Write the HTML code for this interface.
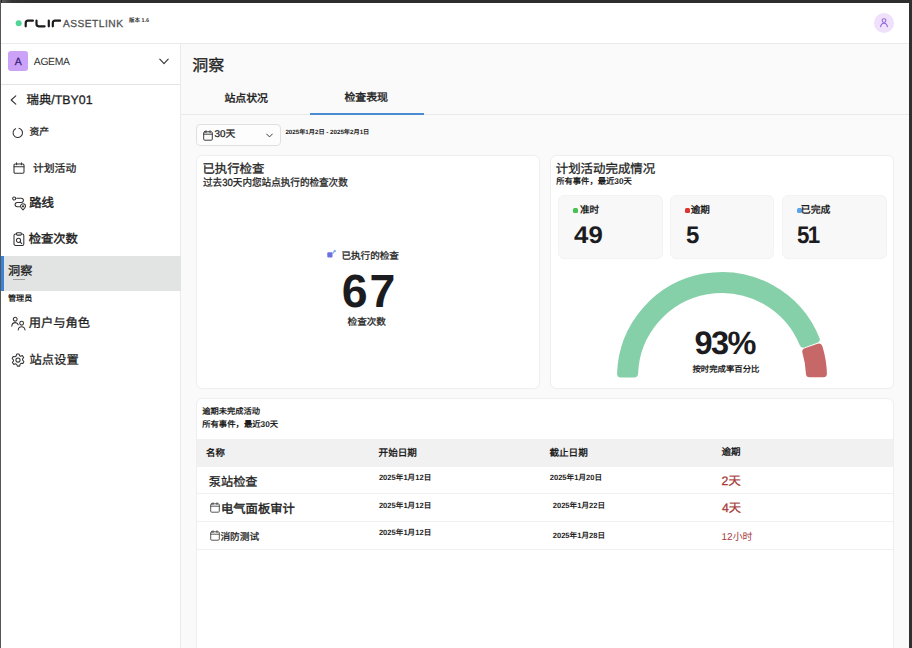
<!DOCTYPE html>
<html lang="zh-CN">
<head>
<meta charset="utf-8">
<title>洞察 - AssetLink</title>
<style>
*{box-sizing:border-box;margin:0;padding:0}
html,body{width:912px;height:648px;overflow:hidden;background:#fff}
body{position:relative;font-family:"Liberation Sans",sans-serif;color:#1f1f1f;text-rendering:geometricPrecision}
.abs{position:absolute}
.t{position:absolute;white-space:nowrap;line-height:1;color:#1f1f1f}
.b{font-weight:bold}
.m{-webkit-text-stroke:0.3px currentColor}
.sb{-webkit-text-stroke:0.42px currentColor}
#frameTop{left:0;top:0;width:912px;height:2.9px;background:linear-gradient(90deg,#0c0c0c 0,#0c0c0c 1px,#585858 2.5px,#343434 12px,#2e2e2e 40px)}
#frameLeft{left:0;top:0;width:1px;height:648px;background:#555}
#frameRight{left:909px;top:0;width:3px;height:648px;background:#303030}
#header{left:1px;top:3px;width:908px;height:41px;background:#fff;border-bottom:1px solid #eaeaea}
#sidebar{left:1px;top:44px;width:180px;height:604px;background:#fff;border-right:1px solid #ebebeb}
#main{left:181px;top:44px;width:728px;height:604px;background:#fafafa}
.card{position:absolute;background:#fff;border:1px solid #eeeeee;border-radius:6px}
.stat{position:absolute;background:#f8f8f8;border:1px solid #f3f3f3;border-radius:6px;top:195px;width:105px;height:64px}
.dot{position:absolute;width:5px;height:5px;border-radius:1.5px}
.ico{position:absolute;overflow:visible}
.hl{position:absolute;height:1px;background:#f0f0f0}
</style>
</head>
<body>
<div class="abs" id="header"></div>
<div class="abs" id="sidebar"></div>
<div class="abs" id="main"></div>
<div class="abs" id="frameTop"></div>
<div class="abs" id="frameLeft"></div>
<div class="abs" id="frameRight"></div>

<!-- HEADER -->
<svg class="ico" id="logo" style="left:15px;top:18px" width="50" height="11" viewBox="0 0 50 11">
  <circle cx="3.7" cy="5.2" r="3" fill="#4fd596"/>
  <g fill="none" stroke="#1b1b1b" stroke-width="2.2" stroke-linecap="round" stroke-linejoin="round">
    <path d="M10.7 8.3V4.9Q10.7 2.7 12.9 2.7H17.9"/>
    <path d="M21.5 2.7V6.1Q21.5 8.3 23.7 8.3H29.6"/>
    <path d="M33.8 2.7V8.3"/>
    <path d="M37.8 8.3V4.9Q37.8 2.7 40 2.7H45.1"/>
  </g>
</svg>
<div class="t m" id="assetlink" style="left:62.90px;top:19.50px;font-size:10.2px;color:#525252;letter-spacing:0.5px">ASSETLINK</div>
<div class="t b" id="ver" style="left:129.00px;top:18.80px;font-size:5.45px;color:#333">版本 1.6</div>
<div class="abs" id="userBtn" style="left:874px;top:13px;width:20px;height:20px;border-radius:50%;background:#efe0fb"></div>
<svg class="ico" id="userIco" style="left:879px;top:17px" width="10" height="11" viewBox="0 0 10 11">
  <g fill="none" stroke="#9466d6" stroke-width="1.1" stroke-linecap="round">
    <circle cx="5" cy="3.6" r="1.9"/>
    <path d="M1.6 9.6C2 7.2 3.4 6.2 5 6.2C6.6 6.2 8 7.2 8.4 9.6"/>
  </g>
</svg>

<!-- SIDEBAR -->
<div class="abs" id="orgBox" style="left:8.40px;top:51.20px;width:20px;height:20px;border-radius:3px;background:#cca1f8"></div>
<div class="t m" id="orgA" style="left:14.80px;top:57.80px;font-size:10.4px;color:#3d2380">A</div>
<div class="t" id="orgName" style="left:33.80px;top:57.70px;font-size:10.4px;color:#333;letter-spacing:-0.35px">AGEMA</div>
<svg class="ico" id="orgChev" style="left:159px;top:58px" width="10" height="7" viewBox="0 0 10 7">
  <path d="M0.8 1.2L5 5.6L9.2 1.2" fill="none" stroke="#333" stroke-width="1.1" stroke-linecap="round" stroke-linejoin="round"/>
</svg>
<div class="hl" id="sideDiv" style="left:1px;top:84px;width:179px;background:#e4e4e4"></div>

<svg class="ico" id="backChev" style="left:10px;top:95px" width="7" height="10" viewBox="0 0 7 10">
  <path d="M5.8 0.8L1.2 5L5.8 9.2" fill="none" stroke="#333" stroke-width="1.1" stroke-linecap="round" stroke-linejoin="round"/>
</svg>
<div class="t m" id="site" style="left:26.50px;top:93.60px;font-size:12.4px">瑞典/TBY01</div>

<svg class="ico" id="icoAsset" style="left:11.90px;top:127.00px" width="12" height="12" viewBox="0 0 12 12">
  <circle cx="5.8" cy="5.8" r="4.7" fill="none" stroke="#333" stroke-width="1.05" stroke-dasharray="26 3.5" transform="rotate(-80 5.8 5.8)"/>
</svg>
<div class="t m" id="navAsset" style="left:29.50px;top:127.60px;font-size:9.8px">资产</div>

<svg class="ico" id="icoPlan" style="left:12.5px;top:161.5px" width="12" height="12" viewBox="0 0 12 12">
  <g fill="none" stroke="#333" stroke-width="1.05" stroke-linejoin="round" stroke-linecap="round">
    <rect x="1" y="2" width="10" height="9.2" rx="1.2"/>
    <path d="M1 4.8H11M3.6 0.8V2.8M8.4 0.8V2.8"/>
  </g>
</svg>
<div class="t m" id="navPlan" style="left:33.00px;top:163.90px;font-size:10.8px;font-weight:500">计划活动</div>

<svg class="ico" id="icoRoute" style="left:11.5px;top:195.5px" width="14" height="15" viewBox="0 0 14 15">
  <g fill="none" stroke="#333" stroke-width="1.05" stroke-linecap="round" stroke-linejoin="round">
    <circle cx="2.2" cy="2.5" r="1.5"/>
    <path d="M4.7 2.2H9.3A2.1 2.1 0 0 1 9.3 6.4H5.3A2.2 2.2 0 0 0 5.3 10.8H7.6"/>
    <path d="M11 14C9.4 12.4 8.5 11.4 8.5 10.3A2.5 2.5 0 0 1 13.5 10.3C13.5 11.4 12.6 12.4 11 14Z" fill="#fff"/>
    <circle cx="11" cy="10.3" r="0.6"/>
  </g>
</svg>
<div class="t sb" id="navRoute" style="left:29.20px;top:196.80px;font-size:12.4px">路线</div>

<svg class="ico" id="icoInsp" style="left:12.5px;top:231.5px" width="12" height="14" viewBox="0 0 12 14">
  <g fill="none" stroke="#333" stroke-width="1.05" stroke-linecap="round" stroke-linejoin="round">
    <rect x="1" y="1.9" width="9.8" height="11.5" rx="1.5"/>
    <rect x="3.5" y="0.7" width="4.8" height="2.4" rx="0.8" fill="#fff"/>
    <circle cx="5.5" cy="8.3" r="2.1"/>
    <path d="M7.1 9.9L8.8 11.6"/>
  </g>
</svg>
<div class="t sb" id="navInsp" style="left:28.70px;top:232.50px;font-size:12.3px">检查次数</div>

<div class="abs" id="navSel" style="left:1px;top:256px;width:179.5px;height:35px;background:#e2e4e4"></div>
<div class="abs" id="navSelBar" style="left:1px;top:256px;width:2.6px;height:35px;background:#3a83d8"></div>
<div class="t m" id="navInsight" style="left:8px;top:264.6px;font-size:12.2px">洞察</div>
<div class="abs" id="navInsightUl" style="left:12.5px;top:278.6px;width:12.5px;height:1px;background:#9a9c9c"></div>

<div class="t b" id="navAdmin" style="left:8px;top:294.6px;font-size:8.1px">管理员</div>

<svg class="ico" id="icoUsers" style="left:11.00px;top:315.90px" width="15" height="15" viewBox="0 0 15 15">
  <g fill="none" stroke="#333" stroke-width="1.05" stroke-linecap="round" stroke-linejoin="round">
    <circle cx="4.2" cy="3.2" r="1.9"/>
    <path d="M0.8 10.2C1 7.6 2.5 6.6 4.2 6.6C5.6 6.6 6.8 7.3 7.3 8.8"/>
    <circle cx="10.6" cy="7.2" r="1.9"/>
    <path d="M7.2 14C7.4 11.7 8.8 10.7 10.6 10.7C12.4 10.7 13.8 11.7 14 14"/>
  </g>
</svg>
<div class="t m" id="navUsers" style="left:28.70px;top:317.10px;font-size:12.25px;font-weight:500">用户与角色</div>

<svg class="ico" id="icoGear" style="left:11.4px;top:352.8px" width="14" height="14" viewBox="0 0 14 14">
  <g fill="none" stroke="#333" stroke-width="1.05" stroke-linejoin="round">
    <path d="M5.9 0.8H8.1L8.5 2.5L9.7 3.1L11.3 2.4L12.7 4.3L11.6 5.7V7L12.9 8.3L11.9 10.3L10.1 10.1L9.1 10.9L8.7 12.9H6.4L5.7 11.2L4.5 10.6L2.8 11.2L1.4 9.3L2.4 7.9V6.6L1.1 5.3L2.2 3.3L4 3.6L5.1 2.8Z" transform="translate(0 0.2)"/>
    <circle cx="7" cy="7" r="2.1"/>
  </g>
</svg>
<div class="t m" id="navSettings" style="left:29.50px;top:353.50px;font-size:12.3px;font-weight:500">站点设置</div>

<!-- MAIN HEADER -->
<div class="t m" id="pageTitle" style="left:192.30px;top:58.80px;font-size:16px">洞察</div>
<div class="t sb" id="tab1" style="left:224.40px;top:93.70px;font-size:10.9px">站点状况</div>
<div class="t sb" id="tab2" style="left:344.40px;top:93.10px;font-size:10.9px">检查表现</div>
<div class="hl" id="tabLine" style="left:181px;top:113.5px;width:728px;background:#e9e9e9"></div>
<div class="abs" id="tabActive" style="left:310px;top:113px;width:114px;height:1.5px;background:#4a8bd2"></div>

<div class="abs" id="rangeSel" style="left:195.5px;top:124px;width:85.5px;height:22px;background:#fdfdfd;border:1px solid #e0e0e0;border-radius:4px"></div>
<svg class="ico" id="icoCal" style="left:202.80px;top:129.60px" width="10" height="11" viewBox="0 0 10 11">
  <g fill="none" stroke="#333" stroke-width="0.95" stroke-linejoin="round" stroke-linecap="round">
    <rect x="0.7" y="1.8" width="8.6" height="8.4" rx="1"/>
    <path d="M0.7 4.2H9.3M3 0.7V2.6M7 0.7V2.6"/>
  </g>
</svg>
<div class="t m" id="rangeVal" style="left:214.60px;top:130.30px;font-size:9.8px;font-weight:500">30天</div>
<svg class="ico" id="rangeChev" style="left:266.4px;top:132.6px" width="7" height="5" viewBox="0 0 7 5">
  <path d="M0.7 1.1L3.5 3.9L6.3 1.1" fill="none" stroke="#3a3a3a" stroke-width="1" stroke-linecap="round" stroke-linejoin="round"/>
</svg>
<div class="t b" id="rangeTxt" style="left:285.40px;top:129.70px;font-size:6.2px;color:#222">2025年1月2日 - 2025年2月1日</div>

<!-- CARD 1 -->
<div class="card" id="card1" style="left:196px;top:155px;width:344px;height:233.5px"></div>
<div class="t m" id="c1Title" style="left:202.40px;top:162.80px;font-size:12.4px">已执行检查</div>
<div class="t m" id="c1Sub" style="left:203.00px;top:179.00px;font-size:10.4px;font-weight:500;transform:scaleX(0.922);transform-origin:0 0">过去30天内您站点执行的检查次数</div>
<svg class="ico" id="c1Ico" style="left:326.70px;top:249.20px" width="11" height="10" viewBox="0 0 11 10">
  <rect x="0.3" y="3.3" width="5.2" height="5.3" rx="1" fill="#6c70e0"/>
  <path d="M5.6 4.4L8.2 1.5" stroke="#86a8ea" stroke-width="1.3" fill="none"/>
  <path d="M6.4 1.1H8.7V3.4Z" fill="#7fa6ea"/>
</svg>
<div class="t m" id="c1Label" style="left:341.40px;top:251.80px;font-size:9.6px;font-weight:500">已执行的检查</div>
<div class="t b" id="c1Num" style="left:341.80px;top:267.50px;font-size:46.5px;color:#1c1c20;letter-spacing:1.8px">67</div>
<div class="t m" id="c1Unit" style="left:347.60px;top:317.70px;font-size:9.6px;font-weight:500">检查次数</div>

<!-- CARD 2 -->
<div class="card" id="card2" style="left:550px;top:155px;width:344px;height:233.5px"></div>
<div class="t m" id="c2Title" style="left:555.70px;top:162.90px;font-size:12.45px">计划活动完成情况</div>
<div class="t b" id="c2Sub" style="left:556.20px;top:177.40px;font-size:8.3px">所有事件，最近30天</div>

<div class="stat" id="stat1" style="left:557.5px"></div>
<div class="dot" id="dot1" style="left:573px;top:208.3px;background:#46c254"></div>
<div class="t b" id="stat1Lbl" style="left:579.90px;top:206.20px;font-size:9.6px">准时</div>
<div class="t b" id="stat1Num" style="left:573.60px;top:224.10px;font-size:24px;color:#1c1c20;letter-spacing:0.2px;transform:scaleX(1.075);transform-origin:0 0">49</div>

<div class="stat" id="stat2" style="left:669.5px;width:104.5px"></div>
<div class="dot" id="dot2" style="left:685px;top:208.3px;background:#dc3232"></div>
<div class="t b" id="stat2Lbl" style="left:690.70px;top:206.20px;font-size:9.6px">逾期</div>
<div class="t b" id="stat2Num" style="left:685.90px;top:224.10px;font-size:24px;color:#1c1c20">5</div>

<div class="stat" id="stat3" style="left:781.5px"></div>
<div class="dot" id="dot3" style="left:796.8px;top:208.3px;background:#5aa3ee"></div>
<div class="t b" id="stat3Lbl" style="left:800.80px;top:205.70px;font-size:9.9px">已完成</div>
<div class="t b" id="stat3Num" style="left:797.40px;top:224.10px;font-size:24px;color:#1c1c20;letter-spacing:-1.8px;transform:scaleX(0.93);transform-origin:0 0">51</div>

<svg class="ico" id="gauge" style="left:612px;top:267px" width="220" height="115" viewBox="612 267 220 115">
  <path id="gGreen" d="M620.75 373.74A101.30 101.30 0 0 1 816.03 339.31L803.22 343.91A87.70 87.70 0 0 0 634.36 373.68Z" fill="#86d0a9" stroke="#86d0a9" stroke-width="7.4" stroke-linejoin="round"/>
  <path id="gRed" d="M818.87 347.37A101.30 101.30 0 0 1 823.24 373.65L809.63 373.61A87.70 87.70 0 0 0 806.01 351.82Z" fill="#c76868" stroke="#c76868" stroke-width="7.4" stroke-linejoin="round"/>
</svg>
<div class="t b" id="gNum" style="left:694.40px;top:327.20px;font-size:32.5px;color:#1c1c20;letter-spacing:-1.5px">93%</div>
<div class="t b" id="gLbl" style="left:692.40px;top:365.00px;font-size:8.4px">按时完成率百分比</div>

<!-- CARD 3 -->
<div class="card" id="card3" style="left:196px;top:398px;width:698px;height:262px"></div>
<div class="t b" id="c3Title" style="left:202.20px;top:407.50px;font-size:8.25px">逾期未完成活动</div>
<div class="t b" id="c3Sub" style="left:202.20px;top:419.70px;font-size:8.36px">所有事件，最近30天</div>
<div class="abs" id="thBg" style="left:197px;top:439.2px;width:696px;height:27.7px;background:#f1f1f2"></div>
<div class="t b" id="th1" style="left:206.00px;top:447.70px;font-size:9.4px">名称</div>
<div class="t b" id="th2" style="left:378.60px;top:448.60px;font-size:9.6px">开始日期</div>
<div class="t b" id="th3" style="left:549.40px;top:448.60px;font-size:9.6px">截止日期</div>
<div class="t b" id="th4" style="left:721.60px;top:447.60px;font-size:9.5px">逾期</div>
<div class="hl" id="rl1" style="left:197px;top:493.4px;width:696px"></div>
<div class="hl" id="rl2" style="left:197px;top:521px;width:696px"></div>
<div class="hl" id="rl3" style="left:197px;top:548.8px;width:696px"></div>

<div class="t m" id="r1Name" style="left:208.80px;top:475.90px;font-size:12.2px;font-weight:500">泵站检查</div>
<div class="t b" id="r1Start" style="left:378.90px;top:474.40px;font-size:7.6px">2025年1月12日</div>
<div class="t b" id="r1Due" style="left:549.70px;top:474.20px;font-size:7.6px">2025年1月20日</div>
<div class="t m" id="r1Over" style="left:721.60px;top:474.70px;font-size:12.25px;color:#a63a3a">2天</div>

<svg class="ico" id="r2Ico" style="left:210.2px;top:502.2px" width="10" height="11" viewBox="0 0 10 11">
  <g fill="none" stroke="#444" stroke-width="0.9" stroke-linejoin="round" stroke-linecap="round">
    <rect x="0.7" y="1.8" width="8.6" height="8.4" rx="1"/>
    <path d="M0.7 4.2H9.3M3 0.7V2.6M7 0.7V2.6"/>
  </g>
</svg>
<div class="t sb" id="r2Name" style="left:221.00px;top:503.20px;font-size:12.3px">电气面板审计</div>
<div class="t b" id="r2Start" style="left:378.90px;top:502.00px;font-size:7.6px">2025年1月12日</div>
<div class="t b" id="r2Due" style="left:552.70px;top:502.20px;font-size:7.6px">2025年1月22日</div>
<div class="t m" id="r2Over" style="left:722.00px;top:502.10px;font-size:12.25px;color:#a63a3a">4天</div>

<svg class="ico" id="r3Ico" style="left:210.2px;top:530.2px" width="10" height="11" viewBox="0 0 10 11">
  <g fill="none" stroke="#444" stroke-width="0.9" stroke-linejoin="round" stroke-linecap="round">
    <rect x="0.7" y="1.8" width="8.6" height="8.4" rx="1"/>
    <path d="M0.7 4.2H9.3M3 0.7V2.6M7 0.7V2.6"/>
  </g>
</svg>
<div class="t m" id="r3Name" style="left:220.40px;top:532.80px;font-size:9.7px;font-weight:500">消防测试</div>
<div class="t b" id="r3Start" style="left:378.90px;top:529.20px;font-size:7.6px">2025年1月12日</div>
<div class="t b" id="r3Due" style="left:552.70px;top:532.20px;font-size:7.6px">2025年1月28日</div>
<div class="t" id="r3Over" style="left:721.60px;top:533.00px;font-size:9.95px;color:#a63a3a">12小时</div>

</body>
</html>
